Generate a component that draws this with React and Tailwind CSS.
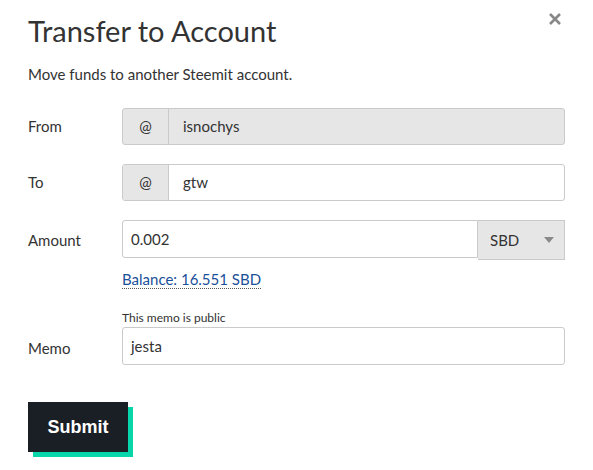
export default function App() {
  const font = { fontFamily: 'Lato, "Open Sans", sans-serif' };
  return (
    <div className="relative h-[470px] w-[593px] bg-white text-[#333]" style={font}>
      <button className="absolute right-[31px] top-[12px] text-[#888]">
        <svg width="14" height="14" viewBox="0 0 14 14">
          <path d="M2 2L12 12M12 2L2 12" stroke="currentColor" strokeWidth="2.6" strokeLinecap="butt" />
        </svg>
      </button>

      <div className="px-[28px] pt-[13px]">
        <h1 className="text-[29px] leading-[36px] text-[#333]">Transfer to Account</h1>
        <p className="mt-[15px] text-[15px] leading-[20px]">Move funds to another Steemit account.</p>

        <div className="mt-[24px] flex flex-col">
          {/* From */}
          <div className="flex items-center">
            <label className="w-[94px] text-[15px]">From</label>
            <div className="flex h-[37px] flex-1 overflow-hidden rounded-[3px] border border-[#cacaca] bg-[#e6e6e6]">
              <span className="flex w-[46px] items-center justify-center border-r border-[#cacaca] text-[15px]">@</span>
              <span className="flex items-center px-[14px] text-[15px]">isnochys</span>
            </div>
          </div>

          {/* To */}
          <div className="mt-[19px] flex items-center">
            <label className="w-[94px] text-[15px]">To</label>
            <div className="flex h-[37px] flex-1 overflow-hidden rounded-[3px] border border-[#cacaca] bg-white">
              <span className="flex w-[46px] items-center justify-center border-r border-[#cacaca] bg-[#e6e6e6] text-[15px]">@</span>
              <span className="flex items-center px-[14px] text-[15px]">gtw</span>
            </div>
          </div>

          {/* Amount */}
          <div className="mt-[19px] flex items-start">
            <label className="w-[94px] pt-[9px] text-[15px]">Amount</label>
            <div className="flex-1">
              <div className="flex">
                <div className="flex h-[38px] flex-1 items-center rounded-l-[3px] border border-[#cacaca] bg-white px-[8px] text-[15px]">0.002</div>
                <div className="flex h-[40px] w-[87px] items-center justify-between border border-l-0 border-[#cacaca] bg-[#e6e6e6] pl-[12px] pr-[10px] text-[15px]">
                  <span>SBD</span>
                  <svg width="10" height="6" viewBox="0 0 10 6">
                    <path d="M0 0H10L5 6Z" fill="#8a8a8a" />
                  </svg>
                </div>
              </div>
              <div className="mt-[7px]">
                <span className="border-b border-dotted border-[#555] text-[15px] leading-[20px] text-[#1a5099]">Balance: 16.551 SBD</span>
              </div>
              <div className="mt-[19px] text-[12px] leading-[16px]">This memo is public</div>
            </div>
          </div>

          {/* Memo */}
          <div className="mt-[1px] flex items-center">
            <label className="w-[94px] pt-[4px] text-[15px]">Memo</label>
            <div className="flex h-[38px] flex-1 items-center rounded-[3px] border border-[#cacaca] bg-white px-[8px] text-[15px]">jesta</div>
          </div>
        </div>

        <div className="mt-[37px]">
          <button
            className="h-[50px] w-[100px] bg-[#1a1f26] text-[18px] font-bold text-white shadow-[5px_5px_0_#06d6a9]"
            style={{ fontFamily: '"Liberation Sans", Arial, sans-serif' }}
          >
            Submit
          </button>
        </div>
      </div>
    </div>
  );
}
